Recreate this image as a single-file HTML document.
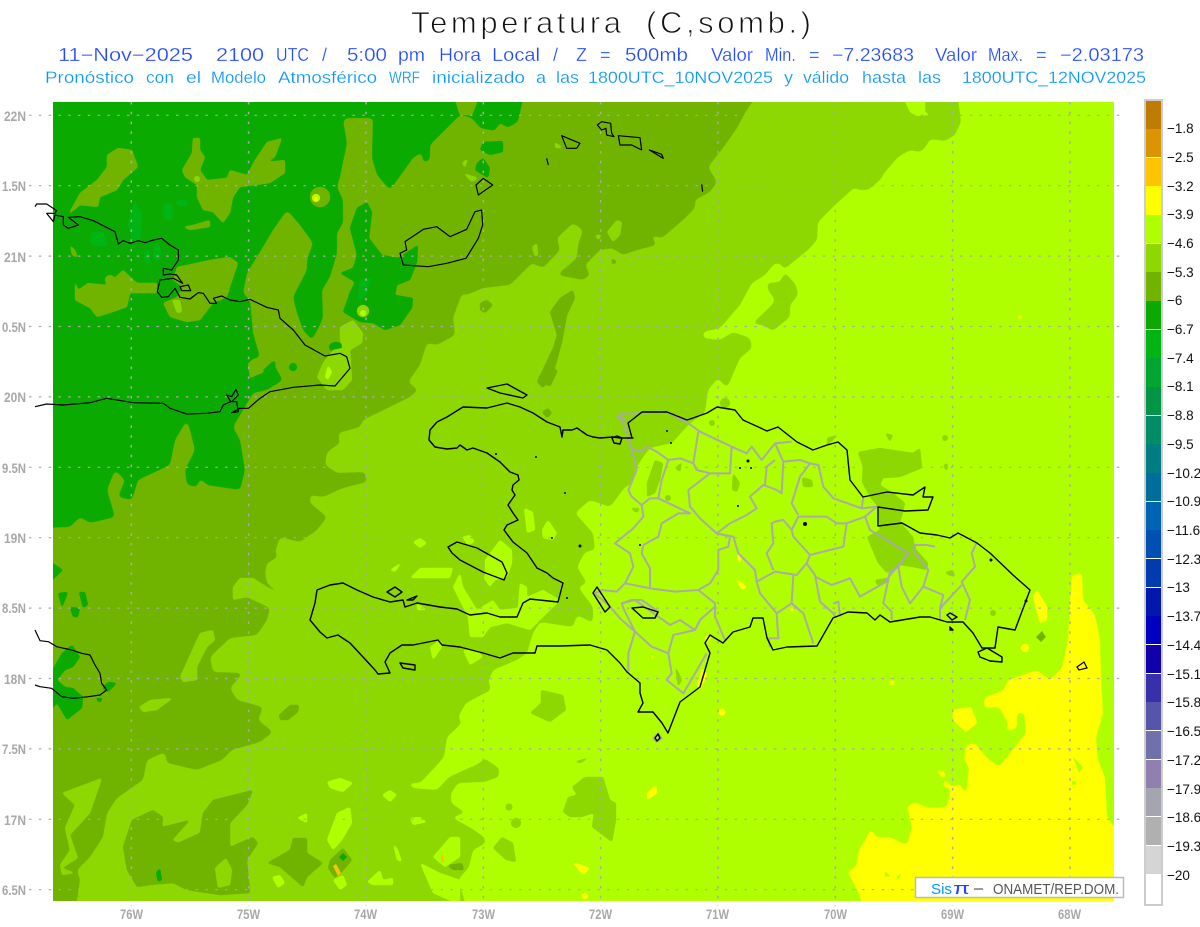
<!DOCTYPE html>
<html><head><meta charset="utf-8"><title>Temperatura</title>
<style>html,body{margin:0;padding:0;background:#fff;width:1200px;height:927px;overflow:hidden}svg{display:block}text{font-family:"Liberation Sans",sans-serif}</style></head>
<body>
<svg xmlns="http://www.w3.org/2000/svg" width="1200" height="927" viewBox="0 0 1200 927">
<rect width="1200" height="927" fill="#fff"/>
<defs><clipPath id="m"><rect x="53" y="102" width="1061" height="799"/></clipPath>
<filter id="s1" filterUnits="userSpaceOnUse" x="0" y="60" width="1200" height="880" color-interpolation-filters="sRGB"><feGaussianBlur stdDeviation="2.4"/><feComponentTransfer><feFuncA type="linear" slope="7" intercept="-3"/></feComponentTransfer></filter>
<filter id="s2" filterUnits="userSpaceOnUse" x="0" y="60" width="1200" height="880" color-interpolation-filters="sRGB"><feGaussianBlur stdDeviation="1.1"/><feComponentTransfer><feFuncA type="linear" slope="5" intercept="-1.6"/></feComponentTransfer></filter>
</defs>
<g clip-path="url(#m)">
<rect x="53" y="102" width="1061" height="799" fill="#b0ff00"/>
<polygon filter="url(#s1)" fill="#8cd800" points="40,90 957,90 961,122 955,135 945,141 930,139 925,148 920,152 910,150 898,157 885,172 880,180 868,190 858,190 855,187 835,205 818,222 817,240 808,250 793,262 783,270 790,278 796,285 798,295 790,305 790,317 780,325 773,331 763,325 752,324 772,305 775,300 768,290 767,283 780,282 785,272 781,264 775,263 765,275 752,283 747,292 740,305 720,328 703,332 703,338 720,340 733,332 750,338 752,348 740,358 727,388 718,378 708,390 705,413 690,423 682,432 672,443 650,448 643,457 635,470 633,483 625,487 610,507 590,500 575,513 593,533 595,550 585,552 577,567 587,583 578,587 593,607 593,623 577,615 573,627 540,622 533,633 527,653 517,660 493,670 490,678 488,680 491,690 466,703 458,717 462,723 447,737 444,757 437,765 420,783 408,783 412,788 437,790 449,777 480,763 484,758 499,768 499,777 484,782 458,783 451,793 451,803 466,813 451,817 471,828 484,837 486,843 473,850 469,867 458,880 469,915 40,915"/>
<g fill="#8cd800" filter="url(#s2)">
<polygon points="530,713 541,703 541,690 563,695 566,710 550,722"/>
<polygon points="574,762 590,757 581,763"/>
<polygon points="572,787 585,777 603,777 610,800 616,803 616,820 612,842 592,827 594,813 581,817 570,817 563,812 568,797 577,795"/>
<circle cx="509" cy="807" r="3.5"/><circle cx="516" cy="823" r="5"/>
<polygon points="493,848 502,837 513,843 516,862 506,860"/>
<polygon points="858,452 880,448 913,453 920,448 922,468 900,477 883,478 880,485 893,493 905,503 903,512 900,522 913,537 915,548 928,563 927,570 913,567 900,565 887,573 878,563 867,537 880,530 878,507 870,497 862,482 863,467"/>
<polygon points="885,433 893,435 890,442"/><polygon points="943,465 948,463 947,472"/><polygon points="945,572 953,570 955,577 948,575"/><polygon points="875,580 887,578 887,583 877,585"/><polygon points="827,438 837,435 833,440 827,445"/><polygon points="733,473 740,483 737,492 732,490"/><polygon points="675,468 682,462 680,472"/><polygon points="647,483 655,460 663,463 660,480 655,493 647,497"/><polygon points="802,477 812,480 813,487 803,487"/><polygon points="675,665 682,680 678,687"/><polygon points="630,508 640,508 637,513"/>
<circle cx="668" cy="498" r="3"/><circle cx="712" cy="423" r="3"/><circle cx="725" cy="403" r="5"/><circle cx="993" cy="613" r="3"/><circle cx="945" cy="438" r="3"/>
</g>
<polygon filter="url(#s1)" fill="#70b400" points="40,90 760,90 745,113 737,128 723,148 708,167 717,182 710,192 695,200 695,208 683,220 662,238 650,235 657,245 637,250 623,255 612,248 600,250 585,265 590,275 583,280 557,275 577,258 578,245 583,230 573,223 557,238 560,250 543,268 532,263 510,285 483,288 467,295 455,292 465,285 453,318 455,335 437,345 427,343 420,365 408,382 418,390 410,397 363,420 360,427 338,433 340,443 327,452 325,465 337,473 365,472 367,482 343,488 323,497 310,495 310,503 327,517 317,530 300,542 280,537 275,552 278,557 267,563 265,573 267,583 282,597 270,595 253,580 240,578 233,587 233,600 247,597 270,608 267,620 257,635 230,638 210,657 213,672 243,673 230,688 237,700 263,707 258,720 273,732 260,742 232,750 222,760 197,770 167,763 165,752 147,760 143,780 117,798 107,813 103,837 90,857 77,870 80,880 75,915 40,915"/>
<g fill="#70b400" filter="url(#s2)">
<polygon points="123,847 132,820 153,810 163,817 162,827 190,820 172,840 178,843 200,833 203,813 213,800 253,790 247,805 230,823 230,847 253,837 258,843 247,860 250,893 220,895 187,890 173,883 150,885 137,887 127,870"/>
<polygon points="267,863 290,850 293,838 307,838 307,853 323,863 307,877 303,887 280,867"/>
<polygon points="279,715 290,705 299,705 298,712 288,720 280,720"/>
<polygon points="550,312 560,298 573,290 575,298 567,315 562,342 553,375 543,388 537,382 553,348 557,335"/>
<polygon points="480,303 487,300 493,305 485,313 480,310"/>
<polygon points="542,412 548,408 552,413 547,418"/><polygon points="538,377 548,370 558,370 550,387"/><polygon points="612,258 617,262 612,265"/>
<polygon points="445,852 452,850 452,857 447,857"/><polygon points="447,865 462,863 464,870 453,870"/>
</g>
<polygon filter="url(#s1)" fill="#0aaa00" points="40,90 525,90 518,122 507,128 500,122 495,131 480,128 472,118 460,115 450,125 430,145 430,160 423,163 422,152 413,158 390,190 377,175 372,158 373,118 347,118 343,120 347,143 340,177 337,187 343,200 343,223 337,233 337,253 330,277 322,290 323,317 320,325 312,340 303,330 297,313 293,297 307,270 307,260 313,243 300,225 287,210 273,230 263,247 247,273 243,293 250,300 253,333 260,357 250,360 248,373 260,373 277,357 275,367 283,380 267,390 253,393 233,427 240,440 245,470 240,490 207,485 200,478 197,487 187,485 185,470 195,450 190,430 187,420 175,440 170,465 138,480 132,500 118,497 125,480 115,470 107,490 115,517 90,523 80,517 70,527 40,528"/>
<g fill="#0aaa00" filter="url(#s2)">
<polygon points="367,202 372,212 369,238 382,255 398,258 418,245 417,262 410,280 397,285 395,295 413,298 412,308 400,325 385,330 373,323 360,322 343,312 350,292 355,282 340,273 353,268 357,255 350,228 357,208"/>
<polygon points="483,142 503,141 503,152 490,155 480,150"/><polygon points="477,163 483,158 490,168 488,178 483,175 475,170"/>
<polygon points="45,558 63,570 45,587"/><polygon points="58,593 68,592 62,608"/><polygon points="79,592 85,592 88,605 83,608"/><polygon points="70,607 80,608 78,617 73,617"/>
<polygon points="62,653 72,645 80,657 73,667 65,670 57,680 65,687 73,688 83,697 82,708 67,720 57,703 45,717 45,683"/>
<polygon points="102,688 108,682 117,683 108,692"/><polygon points="95,698 103,698 100,703"/><polygon points="45,885 57,910 45,910"/>
<ellipse cx="336" cy="347" rx="7" ry="5"/>
<polygon points="156,873 160,868 162,880 158,882"/>
<circle cx="293" cy="367" r="4"/>
</g>
<g fill="#70b400" filter="url(#s2)">
<polygon points="455,100 478,100 472,115 460,115"/>
<polygon points="107,155 118,148 132,150 138,167 123,180 117,190 100,197 98,207 80,205 68,215 80,193 97,180 107,167"/>
<polygon points="182,170 192,153 193,138 200,138 200,150 205,157 200,170 207,180 227,178 230,170 247,175 255,160 267,142 282,138 275,157 267,162 285,160 285,173 270,183 240,187 233,197 230,213 223,223 213,212 203,210 197,197 197,185 185,177"/>
<polygon points="183,227 193,225 210,220 210,227 190,230"/>
<polygon points="75,280 78,290 88,283 107,285 123,270 137,283 157,283 157,293 130,293 127,307 110,313 97,317 90,308 75,300"/>
<polygon points="177,267 187,265 210,260 230,257 238,263 230,287 227,297 213,303 200,320 187,322 170,317 163,303 177,297 183,287 173,280"/>
<circle cx="320" cy="197" r="10"/>
<polygon points="248,363 258,358 264,372 250,378"/>
<circle cx="110" cy="280" r="5"/>
<polygon points="70,245 75,250 78,258 72,255"/>
</g>
<g fill="#00b414" filter="url(#s2)">
<polygon points="135,200 142,215 140,240 132,240 128,223"/><polygon points="92,232 103,232 108,245 97,247 90,243"/><ellipse cx="168" cy="212" rx="5" ry="8"/><ellipse cx="182" cy="203" rx="6" ry="3"/><ellipse cx="147" cy="257" rx="3" ry="8"/><ellipse cx="157" cy="252" rx="4" ry="9"/>
<polygon points="360,280 372,278 366,295 358,302"/>
</g>
<g fill="#8cd800" filter="url(#s2)">
<polygon points="340,327 353,320 363,333 362,343 350,350 352,380 343,390 327,390 317,377 323,363 333,350 343,348 340,340"/>
<polygon points="233,587 240,578 253,578 267,587 280,593 280,598 270,595 257,595 245,597 233,600"/>
<polygon points="180,677 200,633 213,630 215,640 207,647 197,667 197,680 183,682"/>
<polygon points="139,707 150,700 173,698 157,710 143,712"/>
<polygon points="62,793 102,778 90,813 70,835 78,858 62,868 75,873 62,875 60,865 70,850 65,828 75,805"/>
<polygon points="215,868 226,858 232,870 230,885 218,888"/>
<polygon points="555,142 563,148 555,148"/><polygon points="513,185 520,175 513,188"/><polygon points="462,163 468,158 465,168"/><polygon points="463,173 478,178 472,182"/><polygon points="532,247 537,243 538,255 535,257"/><polygon points="607,232 617,220 622,222 620,235 613,242"/><polygon points="595,235 602,235 598,240"/>
<polygon points="172,300 180,300 182,312 177,313"/>
<circle cx="197" cy="179" r="3"/><circle cx="363" cy="311" r="6"/>
</g>
<g fill="#b0ff00" filter="url(#s2)">
<polygon points="902,95 925,95 925,112 930,115 917,116 910,112"/>
<polygon points="327,782 340,778 353,783 343,792 330,788"/><polygon points="382,795 390,790 397,795 390,802"/>
<polygon points="413,542 420,538 427,543 420,548"/><polygon points="390,570 402,562 395,572"/><polygon points="410,578 420,568 453,568 450,578"/>
<polygon points="327,840 337,813 350,807 352,823 342,840 333,850"/><polygon points="297,818 307,813 307,823"/><polygon points="272,877 280,875 285,883 278,888"/><polygon points="333,880 343,875 347,885 340,890"/><polygon points="367,882 380,870 383,880 393,878 393,885 373,885"/><polygon points="393,843 397,860 402,862 398,850"/>
<polygon points="420,863 440,873 460,880 460,905 433,893"/><polygon points="433,857 450,837 460,837 460,857 445,867"/><polygon points="410,818 420,817 427,822 413,825"/>
<polygon points="462,537 470,535 475,542 468,545"/><polygon points="485,560 500,540 512,550 512,563 507,577 497,580 485,577"/><polygon points="483,577 497,577 490,587"/>
<polygon points="524,508 533,512 535,530 527,533"/><polygon points="542,530 548,520 557,533 553,540 543,538"/>
<polygon points="453,587 460,573 463,587 477,610 493,600 500,610 518,608 520,583 527,587 527,597 543,590 560,600 537,623 530,630 507,623 490,627 483,637 470,637 468,617"/>
<polygon points="417,603 427,610 417,610"/><polygon points="430,647 440,640 442,647 433,660"/><polygon points="463,650 477,650 483,657 470,665"/>
<polygon points="328,365 332,372 328,380 325,377"/><circle cx="316" cy="198" r="4"/><circle cx="363" cy="313" r="3"/>
</g>
<polygon filter="url(#s1)" fill="#ffff00" points="1008,680 1017,677 1037,670 1050,680 1062,668 1068,640 1070,602 1072,575 1082,573 1083,600 1095,615 1100,640 1101,680 1103,713 1096,737 1098,760 1105,777 1107,817 1114,827 1125,827 1125,915 867,915 856,887 847,872 856,867 859,850 867,837 870,828 876,837 889,837 907,845 912,827 907,807 914,802 929,808 947,807 951,788 942,787 947,773 931,767 953,787 960,783 966,797 969,767 964,760 966,745 975,743 986,757 999,767 1026,733 1024,713 1017,712 1017,728 1006,732 1008,723 999,707 984,708 984,698 1004,690"/>
<g fill="#ffff00" filter="url(#s2)">
<polygon points="953,710 971,707 977,723 966,732 953,720"/>
<polygon points="1033,597 1037,590 1047,607 1047,620 1040,623"/>
<polygon points="647,793 656,785 657,793 647,800"/><polygon points="572,862 590,868 583,875"/>
<polygon points="735,578 747,587 742,590"/><polygon points="737,553 741,556 741,563 738,561"/><polygon points="702,668 707,675 700,690 697,686"/><polygon points="650,653 655,658 652,659"/><polygon points="705,636 712,636 706,644"/>
<circle cx="722" cy="712" r="3.5"/><circle cx="585" cy="896" r="3"/><circle cx="892" cy="683" r="2.5"/><circle cx="1025" cy="648" r="4"/><circle cx="792" cy="610" r="2"/><circle cx="1020" cy="317" r="2"/><circle cx="316" cy="199" r="2"/>
</g>
<g fill="#b0ff00"><polygon points="1073,757 1083,767 1079,773"/><circle cx="1074" cy="783" r="2"/><polygon points="885,871 890,876 885,877"/><polygon points="896,877 901,874 899,879"/></g>
<polygon points="330,860 343,848 352,860 342,872 335,878 328,868" fill="#70b400" filter="url(#s2)"/>
<polygon points="339,857 343,853 347,857 343,861" fill="#0aaa00"/>
<polygon points="333,866 336,864 341,873 338,876" fill="#ffc400"/>
<rect x="441" y="855" width="3" height="7" fill="#ffc400"/>
<polygon points="1036,637 1042,631 1046,637 1041,642" fill="#70b400"/>
</g>
<!-- grid -->
<path d="M29 115.3H1125M29 185.7H1125M29 256.1H1125M29 326.5H1125M29 396.9H1125M29 467.3H1125M29 537.7H1125M29 608.1H1125M29 678.5H1125M29 748.9H1125M29 819.3H1125M29 889.7H1125" stroke="#aaa" stroke-width="1.2" stroke-dasharray="2.5 7.3" fill="none"/>
<path d="M131.3 102V906M248.6 102V906M366 102V906M483.3 102V906M600.6 102V906M718 102V906M835.3 102V906M952.6 102V906M1070 102V906" stroke="#aaa" stroke-width="1.5" stroke-dasharray="2.5 7.3" fill="none"/>
<!-- DR provinces -->
<g transform="translate(600 390) scale(.33333)" fill="none" stroke="#aaa" stroke-width="6" stroke-linejoin="round">
<path d="M60,70L95,175L110,240L85,300L95,320L125,345L130,380L100,415L45,460L90,490L100,530L75,580L50,605L5,600L-15,610L30,650L60,685L105,725L85,790L85,845"/>
<path d="M65,70L125,70L200,65L265,100L300,125L395,170L440,190L455,170L485,210L525,160L575,155"/>
<path d="M95,175L125,185L140,170L170,185L205,210L240,205L280,220L295,125"/>
<path d="M280,220L290,240L330,250L390,250L395,170"/>
<path d="M205,210L185,270L175,325L150,325L125,345"/>
<path d="M175,325L270,370L235,370L185,400L175,440L130,465L125,490L150,535L150,595L75,580"/>
<path d="M330,250L265,300L270,350L300,385L350,430L390,400L440,375L470,355L450,320L490,285L530,300L545,310L550,215L525,160"/>
<path d="M495,285L500,230L525,210"/>
<path d="M350,430L400,440L415,490L465,540L470,575L525,545L590,555L620,520L630,495L580,440L575,420L595,380L680,380L710,400L740,400L730,470L690,480L630,495"/>
<path d="M350,430L390,440L385,470L355,480L355,540L330,580L295,600L225,605L150,595"/>
<path d="M295,600L345,640L345,680L375,750"/>
<path d="M345,650L300,690L285,720L240,690L210,705L175,680L105,630L65,640L70,655L105,725"/>
<path d="M285,720L220,735L205,790L215,850L200,870L250,910L320,790"/>
<path d="M105,725L155,770L205,790"/>
<path d="M470,575L480,610L530,670L535,745L505,745L510,770"/>
<path d="M580,555L575,640L530,670"/>
<path d="M575,640L610,670L640,760"/>
<path d="M620,520L645,555L660,635L700,670L705,680"/>
<path d="M645,560L695,585L750,565L780,620L850,580L925,490"/>
<path d="M700,640L715,635L720,680"/>
<path d="M550,215L600,210L630,220L600,260L575,340L595,375"/>
<path d="M630,220L655,225L670,290L700,325L785,355L830,350L795,380L810,420L925,490"/>
<path d="M795,380L740,400M785,355L790,320"/>
<path d="M525,395L515,400L520,460L500,490L520,540M525,395L550,390L575,420"/>
<path d="M925,490L895,530L905,590L930,640L970,590L985,540L945,490L945,465L980,465L1005,470"/>
<path d="M895,530L870,545L850,640L875,665L875,690"/>
<path d="M970,590L1030,615L1020,655L1020,690"/>
<path d="M1130,458L1115,490L1125,530L1085,575L1110,630L1095,690M1085,585L1020,655"/>
<path d="M65,640L95,630L125,630L175,665L165,685"/>
<path d="M160,1045L175,1030L185,1045L170,1055Z"/>
<path d="M60,70L55,85L80,90"/>
</g>
<!-- Hispaniola coast -->
<g fill="none" stroke="#000" stroke-width="1.4" stroke-linejoin="round">
<polygon points="633,438 620,438 613,437 600,438 593,437 587,435 577,428 572,430 563,430 562,437 560,427 547,422 533,413 520,407 507,403 487,408 463,407 447,417 437,422 430,430 429,440 435,447 447,449 457,448 460,445 467,450 473,448 487,453 500,462 510,472 518,475 519,480 513,485 512,490 515,495 508,505 513,513 518,520 507,525 504,530 513,542 527,553 537,568 547,573 553,578 563,583 558,602 530,599 523,603 517,617 500,617 487,613 470,615 457,609 440,607 417,603 405,607 403,600 390,602 373,597 357,590 343,583 330,585 317,590 315,603 310,620 320,632 327,638 338,635 350,643 363,657 375,670 378,674 390,673 385,662 390,653 402,645 413,645 438,640 442,645 460,647 483,653 500,658 513,653 535,653 537,646 560,646 590,645 607,650 620,663 627,672 640,683 640,693 643,703 638,712 653,712 662,723 668,733 680,702 700,687 710,653 705,643 710,635 723,643 733,632 750,627 753,618 763,618 767,638 773,650 787,647 817,646 833,618 848,612 867,613 875,620 880,615 890,622 920,617 930,617 947,622 963,622 973,633 982,648 995,648 998,627 1015,630 1030,590 1013,575 990,553 977,543 958,533 950,538 937,535 920,533 902,523 878,526 878,507 905,511 928,510 933,497 923,497 925,487 913,495 887,492 863,497 850,480 847,450 838,442 827,445 813,450 797,442 778,427 767,431 743,420 735,410 717,407 707,413 693,418 687,420 667,412 642,412 628,423 632,438"/>
<polygon points="448,547 457,542 477,548 502,562 507,573 504,580 483,572 460,560 452,553"/>
<polygon points="487,388 507,384 527,395 523,398 500,393"/>
<polygon points="387,592 395,587 402,592 395,597"/>
<polygon points="407,600 417,596 413,600"/>
<polygon points="400,663 415,665 415,670 403,668"/>
<polygon points="593,593 597,587 610,607 605,612"/>
<polygon points="632,608 643,607 658,612 655,618 643,618"/>
<polygon points="978,652 987,648 1002,657 1002,662 990,661 980,657"/>
<polygon points="947,615 950,613 957,617 952,620"/>
<polygon points="950,627 953,630 950,630"/>
<polygon points="655,738 658,734 660,738 657,741"/>
<polygon points="612,438 617,436 622,438 620,444 614,443"/>
</g>
<g fill="#000"><circle cx="667" cy="431" r="1"/><circle cx="671" cy="443" r="1"/><circle cx="748" cy="461" r="1.5"/><circle cx="751" cy="468" r="1"/><circle cx="740" cy="468" r="1"/><circle cx="738" cy="506" r="1"/><circle cx="640" cy="545" r="1"/><circle cx="805" cy="524" r="2"/><circle cx="991" cy="560" r="1.5"/><circle cx="1026" cy="601" r="1.5"/><circle cx="565" cy="493" r="1"/><circle cx="552" cy="538" r="1"/><circle cx="567" cy="598" r="1"/><circle cx="580" cy="546" r="1.5"/><circle cx="496" cy="454" r="1"/><circle cx="536" cy="457" r="1"/></g>
<!-- Cuba + Bahamas -->
<g transform="translate(0 100) scale(.33333)" fill="none" stroke="#000" stroke-width="3.6" stroke-linejoin="round">
<path d="M105,320L110,312L140,312L170,332L165,340L140,340L160,365L165,345L190,350L190,375L205,385L235,375L205,352L240,350L280,362L345,395L355,432L370,422L390,430L415,422L435,428L460,420L485,415L510,435L535,450L535,480L515,510L490,505L490,525L510,522L530,525L548,550L520,535L480,540L472,575L485,592L505,590L525,565L540,592L570,597L595,578L610,580L630,610L650,610L640,595L665,588L690,600L720,605L750,598L800,622L835,630L840,655L880,690L915,735L975,768L1020,760L1040,770L1050,805L1005,858L960,855L880,862L810,875L780,895L745,925L720,925L695,938L715,935L710,905L695,905L715,885L708,868L695,890L680,885L692,905L670,915L660,935L620,940L560,942L510,925L490,910L400,908L320,895L270,908L190,915L140,912L105,920"/>
<polygon points="540,560 565,555 572,572 545,572"/>
</g>
<g transform="translate(340 95) scale(.33333)" fill="none" stroke="#000" stroke-width="3.6" stroke-linejoin="round">
<polygon points="195,440 250,403 290,395 330,425 380,403 405,350 425,345 428,390 415,430 378,490 320,505 265,515 190,510 180,475 200,465"/>
<polygon points="408,270 430,250 458,270 415,300"/>
<polygon points="665,122 720,145 710,160 680,160"/>
<polygon points="772,90 785,80 812,85 815,115 822,125 800,120 798,100 785,105"/>
<polygon points="835,122 900,128 905,165 875,150 840,150"/>
<polygon points="928,165 965,178 970,190"/>
<path d="M620,190L625,210M1085,268L1088,290"/>
</g>
<g transform="translate(40 480) scale(.33333)" fill="none" stroke="#000" stroke-width="3.6" stroke-linejoin="round">
<path d="M-15,450L0,482L25,485L50,500L95,510L125,520L150,525L165,555L180,580L185,610L200,630L180,645L145,650L100,655L65,650L35,625L0,620L-15,615"/>
</g>
<polygon points="1077,667 1084,662 1087,668 1079,670" fill="none" stroke="#000" stroke-width="1.2"/>
<!-- titles -->
<g fill="#111" font-size="31" stroke="#fff" stroke-width=".9">
<text x="411" y="33" textLength="210" lengthAdjust="spacing">Temperatura</text>
<text x="646" y="33" textLength="165" lengthAdjust="spacing">(C,somb.)</text>
</g>
<g fill="#2048ff" font-size="18" stroke="#fff" stroke-width=".25">
<text x="58" y="61" textLength="135" lengthAdjust="spacingAndGlyphs">11−Nov−2025</text>
<text x="216" y="61" textLength="48" lengthAdjust="spacingAndGlyphs">2100</text>
<text x="276" y="61" textLength="33" lengthAdjust="spacingAndGlyphs">UTC</text>
<text x="322" y="61">/</text>
<text x="347" y="61" textLength="40" lengthAdjust="spacingAndGlyphs">5:00</text>
<text x="398" y="61" textLength="27" lengthAdjust="spacingAndGlyphs">pm</text>
<text x="439" y="61" textLength="42" lengthAdjust="spacingAndGlyphs">Hora</text>
<text x="492" y="61" textLength="48" lengthAdjust="spacingAndGlyphs">Local</text>
<text x="553" y="61">/</text>
<text x="576" y="61">Z</text>
<text x="600" y="61">=</text>
<text x="625" y="61" textLength="63" lengthAdjust="spacingAndGlyphs">500mb</text>
<text x="711" y="61" textLength="42" lengthAdjust="spacingAndGlyphs">Valor</text>
<text x="765" y="61" textLength="31" lengthAdjust="spacingAndGlyphs">Min.</text>
<text x="809" y="61">=</text>
<text x="832" y="61" textLength="82" lengthAdjust="spacingAndGlyphs">−7.23683</text>
<text x="935" y="61" textLength="42" lengthAdjust="spacingAndGlyphs">Valor</text>
<text x="988" y="61" textLength="35" lengthAdjust="spacingAndGlyphs">Max.</text>
<text x="1036" y="61">=</text>
<text x="1060" y="61" textLength="84" lengthAdjust="spacingAndGlyphs">−2.03173</text>
</g>
<g fill="#0a96ff" font-size="16.5" stroke="#fff" stroke-width=".2">
<text x="45" y="83" textLength="89" lengthAdjust="spacingAndGlyphs">Pronóstico</text>
<text x="146" y="83" textLength="28" lengthAdjust="spacingAndGlyphs">con</text>
<text x="186" y="83" textLength="15" lengthAdjust="spacingAndGlyphs">el</text>
<text x="211" y="83" textLength="55" lengthAdjust="spacingAndGlyphs">Modelo</text>
<text x="278" y="83" textLength="99" lengthAdjust="spacingAndGlyphs">Atmosférico</text>
<text x="389" y="83" textLength="31" lengthAdjust="spacingAndGlyphs">WRF</text>
<text x="432" y="83" textLength="93" lengthAdjust="spacingAndGlyphs">inicializado</text>
<text x="536" y="83" textLength="10" lengthAdjust="spacingAndGlyphs">a</text>
<text x="556" y="83" textLength="23" lengthAdjust="spacingAndGlyphs">las</text>
<text x="588" y="83" textLength="185" lengthAdjust="spacingAndGlyphs">1800UTC_10NOV2025</text>
<text x="784" y="83" textLength="9" lengthAdjust="spacingAndGlyphs">y</text>
<text x="803" y="83" textLength="46" lengthAdjust="spacingAndGlyphs">válido</text>
<text x="862" y="83" textLength="44" lengthAdjust="spacingAndGlyphs">hasta</text>
<text x="918" y="83" textLength="23" lengthAdjust="spacingAndGlyphs">las</text>
<text x="962" y="83" textLength="184" lengthAdjust="spacingAndGlyphs">1800UTC_12NOV2025</text>
</g>
<!-- axis labels -->
<g fill="#a8a8a8" font-size="13.5" font-weight="bold">
<text x="4" y="121" textLength="22" lengthAdjust="spacingAndGlyphs">22N</text><text x="2" y="191" textLength="24" lengthAdjust="spacingAndGlyphs">1.5N</text><text x="4" y="262" textLength="22" lengthAdjust="spacingAndGlyphs">21N</text><text x="2" y="332" textLength="24" lengthAdjust="spacingAndGlyphs">0.5N</text><text x="4" y="402" textLength="22" lengthAdjust="spacingAndGlyphs">20N</text><text x="2" y="473" textLength="24" lengthAdjust="spacingAndGlyphs">9.5N</text><text x="4" y="543" textLength="22" lengthAdjust="spacingAndGlyphs">19N</text><text x="2" y="613" textLength="24" lengthAdjust="spacingAndGlyphs">8.5N</text><text x="4" y="684" textLength="22" lengthAdjust="spacingAndGlyphs">18N</text><text x="2" y="754" textLength="24" lengthAdjust="spacingAndGlyphs">7.5N</text><text x="4" y="825" textLength="22" lengthAdjust="spacingAndGlyphs">17N</text><text x="2" y="895" textLength="24" lengthAdjust="spacingAndGlyphs">6.5N</text>
</g>
<g fill="#a8a8a8" font-size="13.5" font-weight="bold">
<text x="120" y="919" textLength="23" lengthAdjust="spacingAndGlyphs">76W</text><text x="237" y="919" textLength="23" lengthAdjust="spacingAndGlyphs">75W</text><text x="354" y="919" textLength="23" lengthAdjust="spacingAndGlyphs">74W</text><text x="472" y="919" textLength="23" lengthAdjust="spacingAndGlyphs">73W</text><text x="589" y="919" textLength="23" lengthAdjust="spacingAndGlyphs">72W</text><text x="706" y="919" textLength="23" lengthAdjust="spacingAndGlyphs">71W</text><text x="824" y="919" textLength="23" lengthAdjust="spacingAndGlyphs">70W</text><text x="941" y="919" textLength="23" lengthAdjust="spacingAndGlyphs">69W</text><text x="1058" y="919" textLength="23" lengthAdjust="spacingAndGlyphs">68W</text>
</g>
<!-- colorbar -->
<rect x="1145" y="100" width="17" height="805" fill="#fff" stroke="#ccc" stroke-width="2"/>
<g>
<rect x="1146" y="101" width="15" height="28" fill="#c07c00"/>
<rect x="1146" y="129" width="15" height="28" fill="#dc9400"/>
<rect x="1146" y="158" width="15" height="28" fill="#ffc400"/>
<rect x="1146" y="186" width="15" height="29" fill="#ffff00"/>
<rect x="1146" y="215" width="15" height="28" fill="#b0ff00"/>
<rect x="1146" y="244" width="15" height="28" fill="#8cd800"/>
<rect x="1146" y="272" width="15" height="29" fill="#70b400"/>
<rect x="1146" y="301" width="15" height="28" fill="#0aaa00"/>
<rect x="1146" y="330" width="15" height="28" fill="#00b414"/>
<rect x="1146" y="358" width="15" height="29" fill="#00a532"/>
<rect x="1146" y="387" width="15" height="28" fill="#009646"/>
<rect x="1146" y="416" width="15" height="28" fill="#008c64"/>
<rect x="1146" y="444" width="15" height="29" fill="#007d82"/>
<rect x="1146" y="473" width="15" height="28" fill="#006e9b"/>
<rect x="1146" y="502" width="15" height="28" fill="#0064b4"/>
<rect x="1146" y="530" width="15" height="28" fill="#0050b4"/>
<rect x="1146" y="559" width="15" height="28" fill="#003cb0"/>
<rect x="1146" y="588" width="15" height="28" fill="#0018ac"/>
<rect x="1146" y="616" width="15" height="28" fill="#0000c0"/>
<rect x="1146" y="645" width="15" height="28" fill="#1000aa"/>
<rect x="1146" y="674" width="15" height="28" fill="#3830aa"/>
<rect x="1146" y="702" width="15" height="28" fill="#5555aa"/>
<rect x="1146" y="731" width="15" height="28" fill="#7070aa"/>
<rect x="1146" y="760" width="15" height="28" fill="#9080b0"/>
<rect x="1146" y="788" width="15" height="28" fill="#a5a5b0"/>
<rect x="1146" y="817" width="15" height="28" fill="#b0b0b0"/>
<rect x="1146" y="846" width="15" height="28" fill="#d5d5d5"/>
<rect x="1146" y="874" width="15" height="30" fill="#fff"/>
</g>
<g fill="#111" font-size="13.5">
<text x="1167" y="133">−1.8</text><text x="1167" y="162">−2.5</text><text x="1167" y="191">−3.2</text><text x="1167" y="219">−3.9</text><text x="1167" y="248">−4.6</text><text x="1167" y="277">−5.3</text><text x="1167" y="305">−6</text><text x="1167" y="334">−6.7</text><text x="1167" y="363">−7.4</text><text x="1167" y="391">−8.1</text><text x="1167" y="420">−8.8</text><text x="1167" y="449">−9.5</text><text x="1167" y="478">−10.2</text><text x="1167" y="506">−10.9</text><text x="1167" y="535">−11.6</text><text x="1167" y="564">−12.3</text><text x="1167" y="592">−13</text><text x="1167" y="621">−13.7</text><text x="1167" y="650">−14.4</text><text x="1167" y="679">−15.1</text><text x="1167" y="707">−15.8</text><text x="1167" y="736">−16.5</text><text x="1167" y="765">−17.2</text><text x="1167" y="794">−17.9</text><text x="1167" y="822">−18.6</text><text x="1167" y="851">−19.3</text><text x="1167" y="880">−20</text>
</g>
<!-- label box -->
<rect x="915.5" y="877.5" width="208" height="20" fill="#fff" stroke="#bbb" stroke-width="1.5"/>
<text x="931" y="894" fill="#0a96ff" font-size="15" textLength="21" lengthAdjust="spacingAndGlyphs">Sis</text>
<text x="953" y="894" fill="#2048ff" font-size="17" textLength="17" lengthAdjust="spacingAndGlyphs">π</text>
<text x="973" y="894" fill="#444" font-size="15" textLength="11" lengthAdjust="spacingAndGlyphs">−</text>
<text x="993" y="894" fill="#555" font-size="14.5" textLength="126" lengthAdjust="spacingAndGlyphs">ONAMET/REP.DOM.</text>
</svg>
</body></html>
